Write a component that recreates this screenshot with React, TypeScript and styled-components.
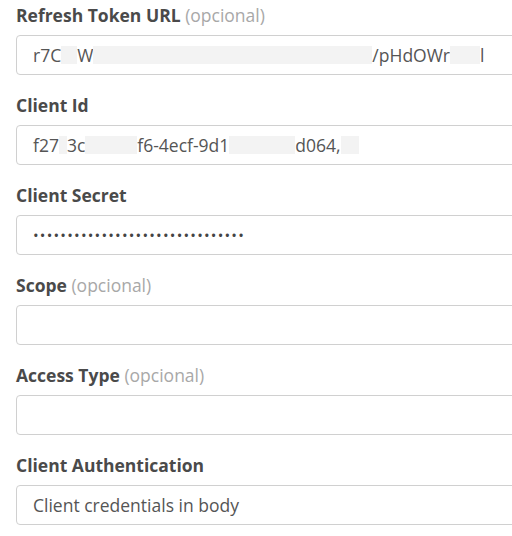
import styled, { createGlobalStyle } from "styled-components";

const GlobalStyle = createGlobalStyle`
  body {
    margin: 0;
    background: #ffffff;
    font-family: "Open Sans", "Liberation Sans", sans-serif;
  }
`;

const Form = styled.div`
  display: flex;
  flex-direction: column;
  gap: 18px;
  padding: 3px 0 0 16px;
  width: 520px;
`;

const Field = styled.div`
  display: flex;
  flex-direction: column;
  gap: 8px;
`;

const Label = styled.div`
  font-size: 17.5px;
  font-weight: 700;
  line-height: 24px;
  color: #4a4a4a;
`;

const Optional = styled.span`
  font-weight: 400;
  color: #a8a8a8;
`;

const Input = styled.div`
  box-sizing: border-box;
  height: 40px;
  border: 1px solid #d0d0d0;
  border-radius: 4px;
  padding: 0 16px;
  display: flex;
  align-items: center;
  font-size: 17.5px;
  color: #555555;
  white-space: nowrap;
  overflow: hidden;
`;

const Dots = styled.span`
  font-size: 15px;
  letter-spacing: 1.2px;
  color: #444444;
`;

// stands in for the blurred-out parts of the secrets
const Blur = styled.span<{ $w: number }>`
  display: inline-block;
  width: ${({ $w }) => $w}px;
  height: 18px;
  vertical-align: middle;
  background: #f3f3f3;
`;

type FieldProps = {
  label: string;
  optional?: boolean;
  children?: React.ReactNode;
};

const FormField = ({ label, optional, children }: FieldProps) => (
  <Field>
    <Label>
      {label} {optional && <Optional>(opcional)</Optional>}
    </Label>
    <Input>{children}</Input>
  </Field>
);

const App = () => {
  return (
    <>
      <GlobalStyle />
      <Form>
        <FormField label="Refresh Token URL" optional>
          r7C<Blur $w={16} />W<Blur $w={279} />/pHdOWr<Blur $w={30} />l
        </FormField>
        <FormField label="Client Id">
          f27<Blur $w={8} />3c<Blur $w={52} />f6-4ecf-9d1<Blur $w={66} />d064,<Blur $w={18} />
        </FormField>
        <FormField label="Client Secret">
          <Dots>•••••••••••••••••••••••••••••••</Dots>
        </FormField>
        <FormField label="Scope" optional />
        <FormField label="Access Type" optional />
        <FormField label="Client Authentication">Client credentials in body</FormField>
      </Form>
    </>
  );
};

export default App;
